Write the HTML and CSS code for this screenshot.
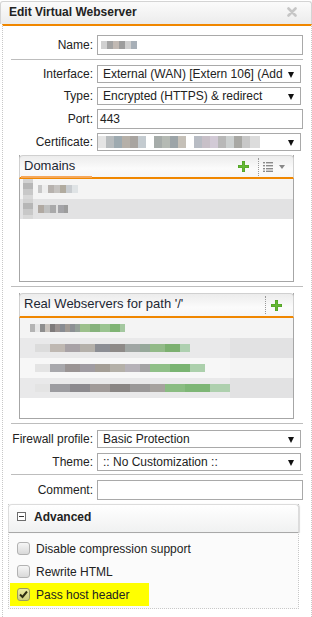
FILE: index.html
```html
<!DOCTYPE html>
<html lang="en">
<head>
  <meta charset="UTF-8" />
  <title>Edit Virtual Webserver</title>
  <link rel="stylesheet" href="styles.css">
</head>
<body>
  <div class="dialog">
    <div class="titlebar">
      <span class="title">Edit Virtual Webserver</span>
      <svg class="close" width="10" height="10" viewBox="0 0 10 10"><path d="M1.5 1.5 L8.5 8.5 M8.5 1.5 L1.5 8.5" stroke="#c6c6c6" stroke-width="2.6" stroke-linecap="round"/></svg>
    </div>

    <div class="content">
      <div class="row">
        <label>Name:</label>
        <div class="input"><span class="blur blur-name"></span></div>
      </div>
      <div class="sep"></div>

      <div class="row">
        <label>Interface:</label>
        <div class="select">External (WAN) [Extern 106] (Add</div>
      </div>
      <div class="row gap">
        <label>Type:</label>
        <div class="select">Encrypted (HTTPS) &amp; redirect</div>
      </div>
      <div class="row gap">
        <label>Port:</label>
        <div class="input">443</div>
      </div>
      <div class="row gap">
        <label>Certificate:</label>
        <div class="select"><span class="blur blur-cert"></span></div>
      </div>

      <div class="panel domains">
        <div class="panel-head">
          <span class="tab">Domains</span>
          <span class="tools">
            <svg class="plus" width="11" height="11" viewBox="0 0 11 11"><path d="M4 0h3v4h4v3H7v4H4V7H0V4h4z" fill="#4f9e25"/><path d="M4.6 0.6h1.8v4h4v1.8h-4v4H4.6v-4h-4V4.6h4z" fill="#66b835"/></svg>
            <span class="dots"></span>
            <svg class="list" width="10" height="10" viewBox="0 0 10 10" fill="#8a8a8a"><rect x="0" y="0" width="2" height="1.4"/><rect x="3" y="0" width="7" height="1.4"/><rect x="0" y="3" width="2" height="1.4"/><rect x="3" y="3" width="7" height="1.4"/><rect x="0" y="6" width="2" height="1.4"/><rect x="3" y="6" width="7" height="1.4"/><rect x="0" y="8.6" width="2" height="1.4"/><rect x="3" y="8.6" width="7" height="1.4"/></svg>
            <span class="caret"></span>
          </span>
        </div>
        <div class="item odd"><span class="blur blur-icon"></span><span class="blur blur-dom1"></span></div>
        <div class="item even"><span class="blur blur-icon"></span><span class="blur blur-dom2"></span></div>
      </div>
      <div class="sep sep-wide"></div>

      <div class="panel servers">
        <div class="panel-head">
          <span class="caption">Real Webservers for path '/'</span>
          <span class="tools">
            <span class="dots"></span>
            <svg class="plus" width="11" height="11" viewBox="0 0 11 11"><path d="M4 0h3v4h4v3H7v4H4V7H0V4h4z" fill="#4f9e25"/><path d="M4.6 0.6h1.8v4h4v1.8h-4v4H4.6v-4h-4V4.6h4z" fill="#66b835"/></svg>
          </span>
        </div>
        <div class="item odd"><span class="blur blur-srv1"></span></div>
        <div class="item even"><span class="band"><span class="blur blur-srv2"></span></span></div>
        <div class="item odd"><span class="band"><span class="blur blur-srv3"></span></span></div>
        <div class="item even"><span class="band"><span class="blur blur-srv4"></span></span></div>
      </div>
      <div class="sep sep-wide"></div>

      <div class="row">
        <label>Firewall profile:</label>
        <div class="select">Basic Protection</div>
      </div>
      <div class="row gap5">
        <label>Theme:</label>
        <div class="select">:: No Customization ::</div>
      </div>
      <div class="sep sep-tight"></div>
      <div class="row">
        <label>Comment:</label>
        <div class="input"></div>
      </div>

      <div class="fieldset">
        <div class="legend"><span class="toggle"></span>Advanced</div>
        <div class="options">
          <div class="option"><span class="cb"></span>Disable compression support</div>
          <div class="option"><span class="cb"></span>Rewrite HTML</div>
          <div class="option marked"><span class="cb checked"><svg width="11" height="11" viewBox="0 0 11 11"><path d="M2 5.5 L4.5 8 L9 2.5" fill="none" stroke="#2d2d10" stroke-width="2"/></svg></span>Pass host header</div>
        </div>
      </div>
    </div>
  </div>
</body>
</html>
```

FILE: styles.css
```css
html, body {
  margin: 0;
  padding: 0;
  background: #fff;
  font-family: "Liberation Sans", Arial, sans-serif;
  font-size: 12px;
  color: #222;
}

.dialog {
  width: 312px;
  height: 617px;
  overflow: hidden;
}

.titlebar {
  height: 23px;
  box-sizing: border-box;
  border: 1px solid #d4d4d4;
  border-bottom: none;
  border-radius: 3px 3px 0 0;
  background: linear-gradient(to bottom, #fbfbfb, #ececec);
  display: flex;
  align-items: center;
  justify-content: space-between;
  padding: 0 14px 0 8px;
  margin-top: 1px;
}

.title {
  font-weight: bold;
  font-size: 12px;
  color: #222;
  margin-top: -2px;
}

.close {
  margin-top: -2px;
}

.content {
  border-top: 2px solid #f08700;
  margin-left: 2px;
  border-left: 1px dotted #c8c8c8;
  border-right: 1px dotted #c8c8c8;
  padding: 9px 8px 0 0;
  height: 600px;
}

.row {
  display: grid;
  grid-template-columns: 90px 1fr;
  column-gap: 4px;
  align-items: center;
}

.row.gap {
  margin-top: 4px;
}

.row.gap5 {
  margin-top: 5px;
}

.row label {
  text-align: right;
  white-space: nowrap;
}

.input {
  height: 20px;
  box-sizing: border-box;
  border: 1px solid #a9a9a9;
  padding: 0 2px;
  line-height: 18px;
  font-size: 12px;
  display: flex;
  align-items: center;
}

.select {
  height: 18px;
  box-sizing: border-box;
  border: 1px solid #a9a9a9;
  margin-right: 2px;
  padding: 0 18px 0 5px;
  line-height: 16px;
  white-space: nowrap;
  overflow: hidden;
  position: relative;
  display: flex;
  align-items: center;
}

.select::after {
  content: "";
  position: absolute;
  right: 6px;
  top: 6px;
  border-style: solid;
  border-width: 6px 3.5px 0 3.5px;
  border-color: #111 transparent transparent transparent;
}

.sep {
  height: 1px;
  background: #bdbdbd;
  margin: 4px 0 5px 8px;
}

.sep-wide {
  margin: 4px 0 6px 8px;
}

.sep-tight {
  margin: 3px 0 5px 8px;
}

/* blurred values */
.blur {
  display: inline-block;
}

.blur-name {
  width: 36px;
  height: 8px;
  margin-left: 1px;
  background:
    linear-gradient(90deg, #d0d0d0 0 6px, #a3a3a3 6px 12px, #c1b9b3 12px 18px, #9d9d9d 18px 24px, #cfcfcf 24px 30px, #a7afb7 30px 36px);
}

.blur-cert {
  width: 162px;
  height: 12px;
  margin-left: -5px;
  background:
    linear-gradient(90deg, #e4e4e4 0 8px, #b8bcbe 8px 16px, #9eaab0 16px 24px, #b6b0a8 24px 32px, #a8a4a0 32px 40px, #c4cbd0 40px 48px, #fff 48px 56px, #a6acaa 56px 64px, #b5bab4 64px 72px, #9ca4a8 72px 80px, #c5c0b8 80px 88px, #fff 88px 96px, #b8bcc4 96px 104px, #c8c0c8 104px 112px, #d2cad6 112px 120px, #b8b8b8 120px 128px, #ccd0d0 128px 136px, #a8a8a4 136px 144px, #c8c8c8 144px 152px, #dcdcdc 152px 162px);
}

.panel {
  margin-left: 16px;
  margin-right: 9px;
  box-sizing: border-box;
  border: 1px solid #a6a6a6;
  border-top: none;
  background: #fff;
}

.domains {
  margin-top: 4px;
  height: 127px;
}

.servers {
  height: 126px;
}

.panel-head {
  height: 24px;
  box-sizing: border-box;
  border: 1px solid #d0d0d0;
  border-bottom: 2px solid #f08700;
  margin: 0 -1px;
  border-radius: 4px 4px 0 0;
  background: linear-gradient(to bottom, #ececec, #fbfbfb 60%, #f6f6f6);
  display: flex;
  justify-content: space-between;
  padding: 0 0 0 3px;
  position: relative;
}

.servers .panel-head {
  height: 25px;
}

.tab, .caption {
  font-size: 13px;
  color: #1d2733;
  padding: 2px 2px 0 1px;
}

.tab {
  width: 66px;
  border-bottom: 2px solid #f6a85a;
  margin-bottom: -1px;
  margin-left: -2px;
  padding-left: 3px;
}

.tools {
  display: flex;
  align-items: center;
  padding-right: 8px;
}

.domains .plus {
  margin-right: 9px;
}

.dots {
  width: 0;
  height: 18px;
  border-left: 1px dotted #999;
}

.domains .dots {
  margin-right: 4px;
}

.servers .dots {
  margin-right: 5px;
}

.servers .tools {
  padding-right: 11px;
}

.caret {
  margin-left: 6px;
  border-style: solid;
  border-width: 4px 3.5px 0 3.5px;
  border-color: #888 transparent transparent transparent;
}

.item {
  height: 20px;
  display: flex;
  align-items: center;
}

.item.odd {
  background: #f4f4f4;
}

.item.even {
  background: #e2e2e3;
}

.band {
  width: 210px;
  height: 100%;
  display: flex;
  align-items: center;
  background: rgba(255, 255, 255, 0.25);
}

.blur-icon {
  width: 10px;
  height: 20px;
  margin-left: 3px;
  background: linear-gradient(to bottom, #d2d2d2 0 4px, #b6b6b6 4px 10px, #c8c8c8 10px 16px, #d8d8d8 16px 20px);
}

.blur-dom1 {
  width: 40px;
  height: 8px;
  margin-left: 5px;
  background: linear-gradient(90deg, #c8c8c8 0 4px, #eee 4px 10px, #b7b2ae 10px 16px, #c6c3c0 16px 22px, #b1ab9f 22px 28px, #c8ccd0 28px 34px, #dfe3e5 34px 40px);
}

.blur-dom2 {
  width: 30px;
  height: 8px;
  margin-left: 5px;
  background: linear-gradient(90deg, #b0a9a2 0 6px, #bfc0c0 6px 12px, #a9a9aa 12px 18px, #e0e0e0 18px 20px, #a4a4a8 20px 26px, #9c9c9c 26px 30px);
}

.blur-srv1 {
  width: 95px;
  height: 8px;
  margin-left: 10px;
  background: linear-gradient(90deg, #b4b4b4 0 5px, #e6e6e6 5px 10px, #8e8e8e 10px 15px, #c8c2bc 15px 20px, #7e7a7a 20px 25px, #9a9290 25px 30px, #888c92 30px 35px, #a09a94 35px 40px, #8c9094 40px 45px, #94a098 45px 50px, #9cc08c 50px 60px, #86b27c 60px 70px, #9ac490 70px 80px, #80b474 80px 90px, #a4c8a0 90px 95px);
}

.blur-srv2, .blur-srv3, .blur-srv4 {
  height: 8px;
  margin-left: 15px;
}

.blur-srv2 {
  width: 155px;
  background: linear-gradient(90deg, #dcdcdc 0 15px, #bfb8b2 15px 30px, #a8a2a6 30px 45px, #b4b0aa 45px 60px, #8c8e94 60px 75px, #8e8a88 75px 90px, #a0a6a4 90px 105px, #96a89a 105px 115px, #92ba88 115px 130px, #7cb070 130px 145px, #aed0b0 145px 155px);
}

.blur-srv3 {
  width: 170px;
  background: linear-gradient(90deg, #e4e4e4 0 15px, #a8a8ac 15px 30px, #9a9494 30px 45px, #a09ca2 45px 60px, #a49e96 60px 75px, #b4b0a8 75px 90px, #b6b2b8 90px 105px, #a4a4a4 105px 115px, #90c088 115px 135px, #7ab472 135px 155px, #acd0ac 155px 170px);
}

.blur-srv4 {
  width: 195px;
  background: linear-gradient(90deg, #e4e4e4 0 15px, #9c9ca0 15px 35px, #8c8a8e 35px 55px, #a09a98 55px 75px, #8a8684 75px 95px, #9a9898 95px 115px, #a6a29e 115px 130px, #8abc82 130px 150px, #7eb676 150px 175px, #aed0ae 175px 195px);
}

.fieldset {
  margin: 4px 4px 0 5px;
  height: 105px;
  box-sizing: border-box;
  border: 1px dotted #c8c8c8;
  border-top: none;
  background: #fbfbfb;
}

.legend {
  height: 29px;
  box-sizing: border-box;
  margin: 0 -1px;
  border: 1px solid #dcdcdc;
  border-bottom: 1px solid #a8a8a8;
  border-radius: 4px 4px 0 0;
  background: linear-gradient(to bottom, #ffffff, #f0f1f1);
  box-shadow: 1px 0 1px rgba(0, 0, 0, 0.15);
  font-weight: bold;
  font-size: 12px;
  display: flex;
  align-items: center;
  padding-left: 8px;
  padding-bottom: 4px;
}

.toggle {
  width: 7px;
  height: 7px;
  border: 1px solid #6e6e6e;
  margin-right: 8px;
  position: relative;
  background: #fff;
}

.toggle::after {
  content: "";
  position: absolute;
  left: 1px;
  right: 1px;
  top: 3px;
  height: 1px;
  background: #333;
}

.options {
  padding: 4px 0 0 1px;
}

.option {
  height: 23px;
  display: flex;
  align-items: center;
  padding-left: 7px;
  white-space: nowrap;
}

.option.marked {
  background: #ffff00;
  width: 132px;
}

.cb {
  width: 13px;
  height: 13px;
  box-sizing: border-box;
  border: 1px solid #b2b2b2;
  border-radius: 3px;
  background: linear-gradient(to bottom, #f6f6f6, #d9d9d9);
  margin-right: 6px;
  display: flex;
  align-items: center;
  justify-content: center;
}

.cb.checked {
  background: linear-gradient(to bottom, #ececa0, #cdcd80);
  border-color: #9c9c60;
}
```
